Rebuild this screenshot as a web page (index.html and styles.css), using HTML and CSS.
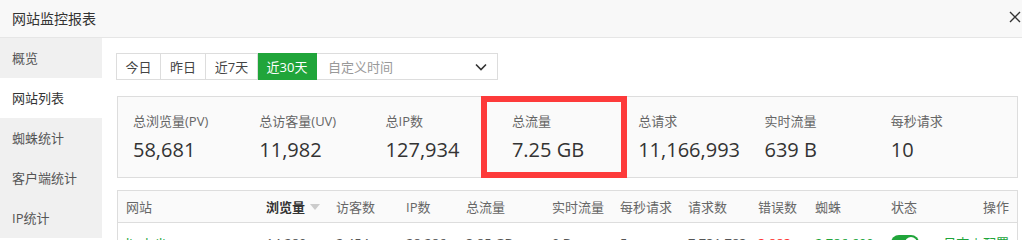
FILE: index.html
```html
<!DOCTYPE html>
<html lang="zh">
<head>
<meta charset="utf-8">
<title>网站监控报表</title>
<link rel="stylesheet" href="styles.css">
</head>
<body>
<div class="dialog">
  <header class="head">
    <span class="title">网站监控报表</span>
    <span class="close"><svg width="12" height="12" viewBox="0 0 12 12"><path d="M1 1L11 11M11 1L1 11" stroke="#333" stroke-width="1.4" fill="none"/></svg></span>
  </header>
  <div class="body">
    <nav class="side">
      <div class="item">概览</div>
      <div class="item active">网站列表</div>
      <div class="item">蜘蛛统计</div>
      <div class="item">客户端统计</div>
      <div class="item">IP统计</div>
    </nav>
    <main class="main">
      <div class="dates">
        <span class="btn w45">今日</span>
        <span class="btn w45">昨日</span>
        <span class="btn w52">近7天</span>
        <span class="btn w59 on">近30天</span>
        <span class="picker"><span class="ph">自定义时间</span><svg width="12" height="8" viewBox="0 0 12 8"><path d="M1 1.5L6 6.5L11 1.5" stroke="#333" stroke-width="1.6" fill="none"/></svg></span>
      </div>
      <div class="stats">
        <div class="stat"><div class="lab">总浏览量(PV)</div><div class="val">58,681</div></div>
        <div class="stat"><div class="lab">总访客量(UV)</div><div class="val">11,982</div></div>
        <div class="stat"><div class="lab">总IP数</div><div class="val">127,934</div></div>
        <div class="stat"><div class="lab">总流量</div><div class="val">7.25 GB</div></div>
        <div class="stat"><div class="lab">总请求</div><div class="val">11,166,993</div></div>
        <div class="stat"><div class="lab">实时流量</div><div class="val">639 B</div></div>
        <div class="stat"><div class="lab">每秒请求</div><div class="val">10</div></div>
        <div class="mark"></div>
      </div>
      <div class="table">
        <div class="row thead">
          <span>网站</span>
          <span class="sort">浏览量<i class="tri"></i></span>
          <span>访客数</span>
          <span>IP数</span>
          <span>总流量</span>
          <span>实时流量</span>
          <span>每秒请求</span>
          <span>请求数</span>
          <span>错误数</span>
          <span>蜘蛛</span>
          <span>状态</span>
          <span class="r">操作</span>
        </div>
        <div class="row">
          <span class="green">lindaili.com</span>
          <span>14,280</span>
          <span>2,454</span>
          <span>28,286</span>
          <span>3.85 GB</span>
          <span>0 B</span>
          <span>5</span>
          <span>7,731,783</span>
          <span class="red">3,883</span>
          <span class="green">2,786,600</span>
          <span><i class="toggle"></i></span>
          <span class="r green">日志 | 配置</span>
        </div>
      </div>
    </main>
  </div>
</div>
</body>
</html>
```

FILE: styles.css
```css
* { box-sizing: border-box; }
html, body { margin: 0; padding: 0; }
body {
  width: 1022px;
  height: 240px;
  overflow: hidden;
  background: #fff;
  font-family: "Open Sans", "Noto Sans CJK SC", sans-serif;
  color: #333;
}
.head {
  height: 38px;
  background: #f8f8f8;
  border-bottom: 1px solid #e6e6e6;
  display: flex;
  align-items: center;
  justify-content: space-between;
  padding: 0 1px 0 12px;
}
.title { font-size: 14px; color: #333; line-height: 20px; }
.close { display: flex; width: 12px; height: 12px; margin-top: -4px; }
.body { display: flex; }
.side { width: 102px; flex: none; }
.item {
  height: 40px;
  line-height: 40px;
  padding-left: 12px;
  font-size: 13px;
  color: #555;
  background: #f0f0f0;
}
.item.active { background: #fff; color: #333; }
.main { flex: 1; padding: 15px 12px 0 14px; }
.dates { display: flex; height: 27px; }
.btn {
  height: 27px;
  border: 1px solid #ddd;
  border-left: none;
  font-size: 13px;
  color: #444;
  display: flex;
  align-items: center;
  justify-content: center;
}
.btn:first-child { border-left: 1px solid #ddd; }
.w45 { width: 45px; }
.w52 { width: 52px; }
.w59 { width: 59px; }
.btn.on { background: #20a53a; border-color: #20a53a; color: #fff; }
.picker {
  width: 181px;
  height: 27px;
  border: 1px solid #ddd;
  border-left: none;
  display: flex;
  align-items: center;
  justify-content: space-between;
  padding: 0 10px 0 11px;
  font-size: 13px;
  color: #999;
}
.stats {
  position: relative;
  margin-top: 16px;
  margin-left: 1px;
  height: 82px;
  border: 1px solid #ddd;
  background: #fafafa;
  display: grid;
  grid-template-columns: repeat(7, 126.3px);
  padding-left: 15px;
}
.stat { padding-top: 15px; }
.lab { font-size: 13px; color: #666; line-height: 18px; }
.val { font-size: 20px; color: #333; line-height: 28px; margin-top: 6px; }
.mark {
  position: absolute;
  left: 363px;
  top: -1px;
  width: 146px;
  height: 82px;
  border: 6px solid #fd3a3a;
}
.table {
  margin-top: 12px;
  margin-left: 1px;
  border: 1px solid #ddd;
  border-bottom: none;
}
.row {
  display: grid;
  grid-template-columns: 140px 70px 70px 60px 86px 68px 68px 70px 57px 76px 1fr auto;
  height: 40px;
  align-items: center;
  font-size: 13px;
  color: #555;
  border-bottom: 1px solid #eee;
}
.row > span { padding-left: 8px; white-space: nowrap; }
.row > span.r { padding: 0 8px 0 0; text-align: right; }
.thead { height: 32px; background: #fafafa; color: #666; border-bottom: 1px solid #ddd; }
.sort { font-weight: bold; color: #333; display: flex; align-items: center; }
.tri {
  display: inline-block;
  margin-left: 5px;
  border-left: 5px solid transparent;
  border-right: 5px solid transparent;
  border-top: 6px solid #ccc;
}
.green { color: #20a53a; }
.red { color: #f33; }
.toggle {
  display: block;
  width: 28px;
  height: 16px;
  border-radius: 8px;
  background: #20a53a;
  position: relative;
}
.toggle::after {
  content: "";
  position: absolute;
  right: 2px;
  top: 2px;
  width: 12px;
  height: 12px;
  border-radius: 50%;
  background: #fff;
}
```
